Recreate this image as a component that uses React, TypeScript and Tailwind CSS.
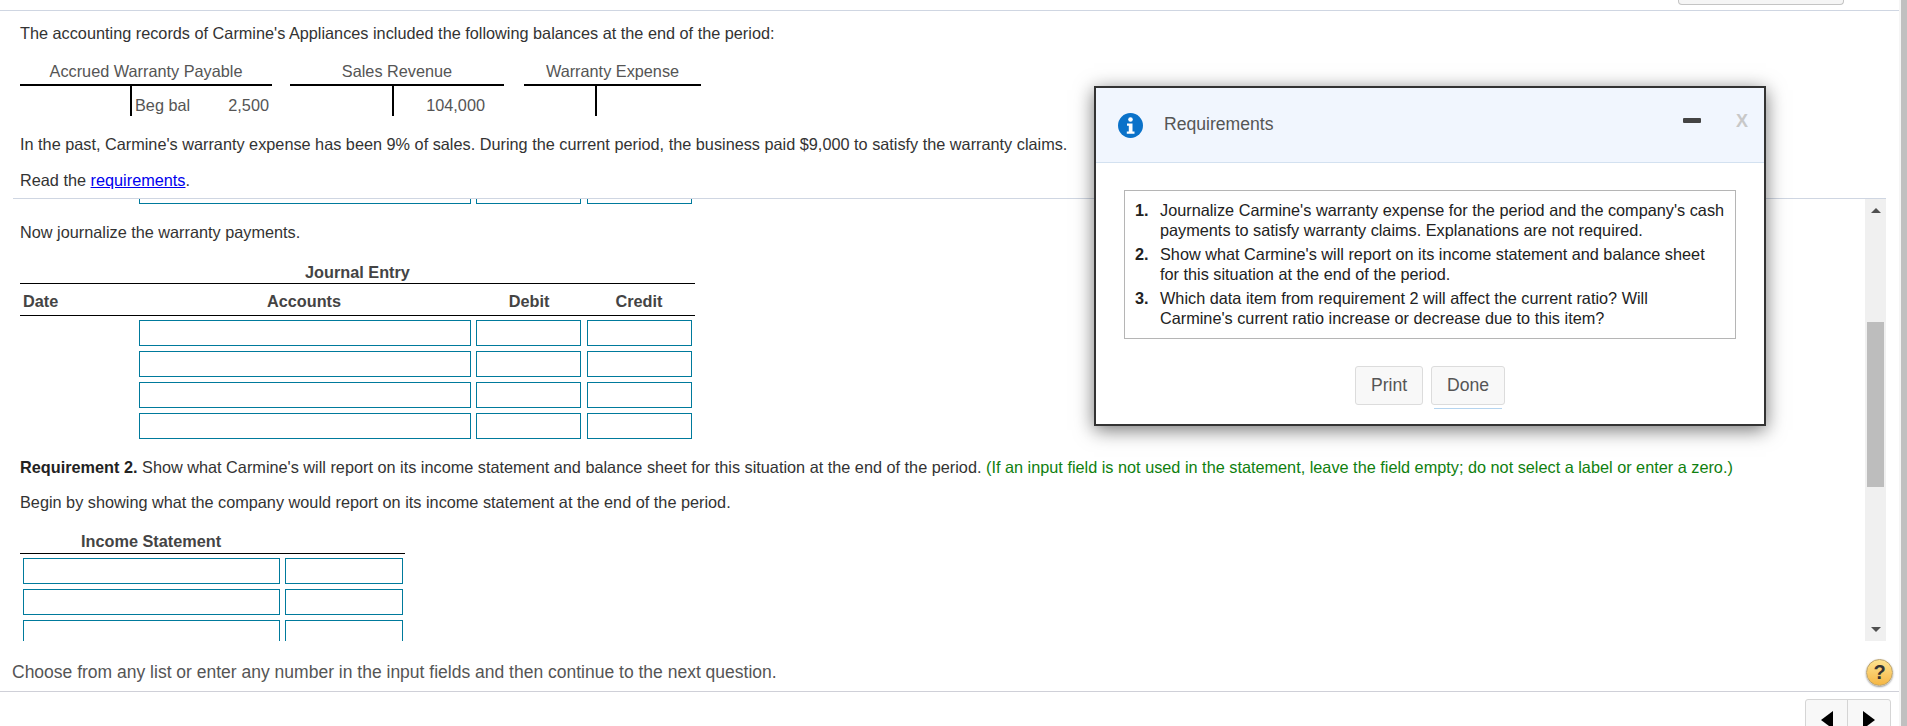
const ff = "font-['Liberation_Sans',Arial,sans-serif]";

function Field({ w }: { w: string }) {
  return <div className={`h-[26px] border border-[#007a9c] bg-white ${w}`} />;
}

function TAccount({ title, w, stem, children }: { title: string; w: string; stem: string; children?: React.ReactNode }) {
  return (
    <div className={`${w} text-[#555]`}>
      <div className="h-[23px] text-center leading-[20px]">{title}</div>
      <div className="h-[32px] border-t-[2px] border-black flex">
        <div className={`${stem} border-r-[2px] border-black`} />
        <div className="flex-1 flex items-center pt-[8px]">{children}</div>
      </div>
    </div>
  );
}

function JournalRow() {
  return (
    <div className="flex gap-[5px] ml-[139px] mb-[5px]">
      <Field w="w-[332px]" />
      <Field w="w-[105px]" />
      <Field w="w-[105px] ml-[1px]" />
    </div>
  );
}

function IncomeRow() {
  return (
    <div className="flex gap-[5px] ml-[23px] mb-[5px]">
      <Field w="w-[257px]" />
      <Field w="w-[118px]" />
    </div>
  );
}

const reqs: [string, string, string][] = [
  ["1.", "Journalize Carmine's warranty expense for the period and the company's cash", "payments to satisfy warranty claims. Explanations are not required."],
  ["2.", "Show what Carmine's will report on its income statement and balance sheet", "for this situation at the end of the period."],
  ["3.", "Which data item from requirement 2 will affect the current ratio? Will", "Carmine's current ratio increase or decrease due to this item?"],
];

function Modal() {
  return (
    <div className="absolute left-[1094px] top-[86px] w-[672px] h-[340px] border-[2px] border-[#333] bg-white shadow-[0_4px_18px_rgba(0,0,0,0.55)] z-10">
      <div className="h-[75px] bg-[#f1f6fe] border-b border-[#d3e1f0] flex items-center pl-[22px] pr-[16px]">
        <svg width="25" height="25" viewBox="0 0 25 25" className="shrink-0">
          <circle cx="12.5" cy="12.5" r="12.5" fill="#0b72c9" />
          <circle cx="12.5" cy="6.5" r="2.3" fill="#fff" />
          <path d="M9 10.5h5.5v8H16.5v2.2H8.8v-2.2h2v-5.8H9z" fill="#fff" />
        </svg>
        <span className="ml-[21px] mb-[2px] text-[17.6px] text-[#555]">Requirements</span>
        <span className="ml-auto mb-[10px] w-[18px] h-[5px] bg-[#444] rounded-[1px]" />
        <span className="ml-[35px] mb-[8px] text-[18px] font-bold leading-none text-[#c8c8c8]">X</span>
      </div>
      <div className="mx-[28px] mt-[27px] h-[149px] border border-[#b5b5b5] pl-[10px] pt-[9px] text-[16.27px] leading-[20px] text-[#222]">
        <ol>
          {reqs.map(([n, a, b]) => (
            <li key={n} className="flex mb-[4px] whitespace-nowrap">
              <span className="w-[25px] shrink-0 font-bold">{n}</span>
              <span>
                {a}
                <br />
                {b}
              </span>
            </li>
          ))}
        </ol>
      </div>
      <div className="flex justify-center gap-[8px] mt-[27px] text-[#555] text-[17.6px]">
        <div className="w-[68px] h-[39px] flex items-center justify-center bg-[#f8f8f8] border border-[#dcdcdc] rounded-[3px]">Print</div>
        <div className="relative w-[74px] h-[39px] flex items-center justify-center bg-[#f8f8f8] border border-[#dcdcdc] rounded-[3px]">
          Done
          <div className="absolute left-[2px] right-[2px] top-[41px] h-[1px] bg-[#b5d4ef]" />
        </div>
      </div>
    </div>
  );
}

function InnerScrollbar() {
  return (
    <div className="w-[21px] bg-[#f0f0f0] flex flex-col items-center justify-between py-[9px] relative">
      <svg width="10" height="5" viewBox="0 0 10 5"><path d="M5 0l5 5H0z" fill="#505050" /></svg>
      <div className="absolute left-[2px] right-[2px] top-[123px] h-[165px] bg-[#bdbdbd]" />
      <svg width="10" height="5" viewBox="0 0 10 5"><path d="M0 0h10L5 5z" fill="#505050" /></svg>
    </div>
  );
}

export default function App() {
  return (
    <div className={`${ff} relative w-[1907px] h-[726px] overflow-hidden bg-white text-[16.27px] text-[#333] flex`}>
      <div className="w-[1899px] flex flex-col">
        <div className="h-[10px] relative shrink-0">
          <div className="absolute left-[1678px] top-0 w-[166px] h-[5px] bg-[#f5f5f5] border border-t-0 border-[#c4c4c4] rounded-b-[4px]" />
        </div>
        <div className="border-t border-[#cfd6e2] h-[188px] shrink-0 pl-[20px] pt-[12px]">
          <p className="h-[20px] leading-[20px]">The accounting records of Carmine's Appliances included the following balances at the end of the period:</p>
          <div className="flex mt-[18px]">
            <TAccount title="Accrued Warranty Payable" w="w-[252px]" stem="w-[112px]">
              <div className="pl-[3px] w-[67px]">Beg bal</div>
              <div className="w-[70px] text-right">2,500</div>
            </TAccount>
            <TAccount title="Sales Revenue" w="w-[214px] ml-[18px]" stem="w-[104px]">
              <div className="flex-1 text-right pr-[19px]">104,000</div>
            </TAccount>
            <TAccount title="Warranty Expense" w="w-[177px] ml-[20px]" stem="w-[73px]" />
          </div>
          <p className="h-[20px] leading-[20px] mt-[18px] whitespace-nowrap">In the past, Carmine's warranty expense has been 9% of sales. During the current period, the business paid $9,000 to satisfy the warranty claims.</p>
          <p className="h-[20px] leading-[20px] mt-[16px]">
            Read the <a className="text-[#0000ee] underline">requirements</a>.
          </p>
        </div>

        <div className="h-[443px] shrink-0 ml-[13px] mr-[13px] border-t border-[#cfd6e2] flex">
          <div className="flex-1 overflow-hidden -ml-[13px]">
            <div className="flex gap-[5px] ml-[139px] h-[5px] overflow-hidden">
              <div className="w-[332px] h-[5px] border border-t-0 border-[#007a9c]" />
              <div className="w-[105px] h-[5px] border border-t-0 border-[#007a9c]" />
              <div className="w-[105px] ml-[1px] h-[5px] border border-t-0 border-[#007a9c]" />
            </div>
            <p className="ml-[20px] mt-[18px] h-[20px] leading-[20px]">Now journalize the warranty payments.</p>
            <div className="ml-[20px] mt-[20px] w-[675px] font-bold text-[#444]">
              <div className="h-[22px] leading-[20px] text-center border-b border-black">Journal Entry</div>
              <div className="h-[32px] pt-[4px] flex items-center border-b border-black">
                <div className="w-[119px] pl-[3px]">Date</div>
                <div className="w-[333px] text-center pr-[3px]">Accounts</div>
                <div className="w-[111px] text-center pl-[3px]">Debit</div>
                <div className="w-[111px] text-center pl-[1px]">Credit</div>
              </div>
            </div>
            <div className="mt-[4px]">
              <JournalRow />
              <JournalRow />
              <JournalRow />
              <JournalRow />
            </div>
            <p className="ml-[20px] mt-[18px] h-[20px] leading-[20px] whitespace-nowrap">
              <b className="text-[#222]">Requirement 2.</b> Show what Carmine's will report on its income statement and balance sheet for this situation at the end of the period.{" "}
              <span className="text-[#0f7f0f]">(If an input field is not used in the statement, leave the field empty; do not select a label or enter a zero.)</span>
            </p>
            <p className="ml-[20px] mt-[15px] h-[20px] leading-[20px]">Begin by showing what the company would report on its income statement at the end of the period.</p>
            <div className="ml-[20px] mt-[19px] w-[385px] font-bold text-[#444]">
              <div className="h-[23px] leading-[20px] pl-[61px] border-b border-black">Income Statement</div>
            </div>
            <div className="mt-[4px]">
              <IncomeRow />
              <IncomeRow />
              <IncomeRow />
            </div>
          </div>
          <InnerScrollbar />
        </div>

        <div className="h-[51px] shrink-0 border-b border-[#cfd0d8] flex items-center pl-[12px] pr-[6px] justify-between pt-[12px] text-[17.5px] text-[#555]">
          <span>Choose from any list or enter any number in the input fields and then continue to the next question.</span>
          <div className="w-[27px] h-[27px] rounded-full bg-gradient-to-b from-[#fde38e] to-[#f5b642] border border-[#b9a06a] shadow-[0_1px_2px_rgba(0,0,0,0.4)] flex items-center justify-center text-[#333] font-bold text-[20px] leading-none">?</div>
        </div>

        <div className="flex-1 min-h-0 overflow-hidden flex justify-end pr-[8px] pt-[7px]">
          <div className="w-[86px] h-[40px] shrink-0 bg-[#f8f8f8] border border-[#d5d5d5] rounded-t-[3px] flex">
            <div className="w-[42px] border-r border-[#d5d5d5] flex justify-center pt-[11px]">
              <svg width="12" height="18" viewBox="0 0 12 18"><path d="M12 0v18L0 9z" fill="#000" /></svg>
            </div>
            <div className="flex-1 flex justify-center pt-[11px]">
              <svg width="12" height="18" viewBox="0 0 12 18"><path d="M0 0v18l12-9z" fill="#000" /></svg>
            </div>
          </div>
        </div>
      </div>
      <div className="flex-1 pl-[2px] bg-[#f5f5f5]">
        <div className="h-full bg-[#c0c0c0]" />
      </div>
      <Modal />
    </div>
  );
}
